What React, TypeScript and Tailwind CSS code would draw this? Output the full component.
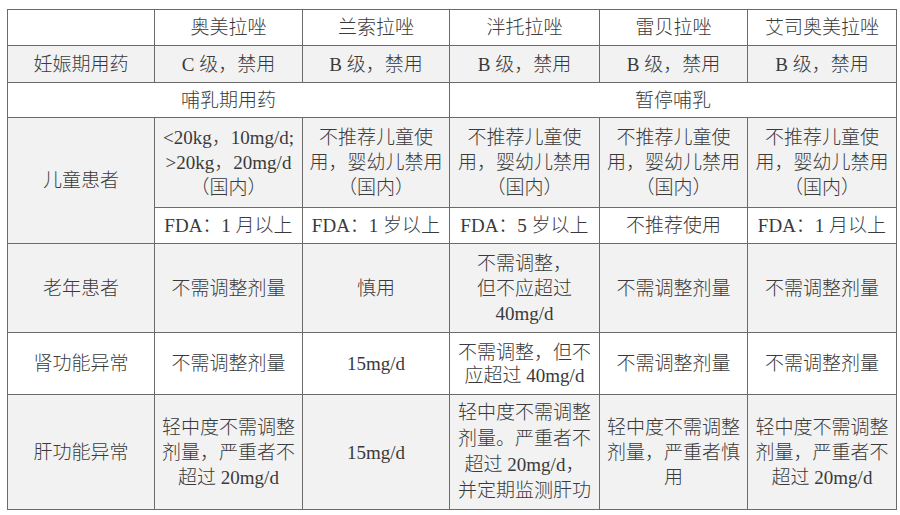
import React from "react";

const font = { fontFamily: '"Liberation Serif", "Noto Sans CJK SC", serif' };

function Cell({
  children,
  gray,
  colSpan,
  rowSpan,
}: {
  children: React.ReactNode;
  gray?: boolean;
  colSpan?: number;
  rowSpan?: number;
}) {
  return (
    <td
      colSpan={colSpan}
      rowSpan={rowSpan}
      className={`border border-[#6b6b6b] p-0 text-center align-middle whitespace-nowrap leading-[25px] ${
        gray ? "bg-[#f2f2f2]" : "bg-white"
      }`}
    >
      {children}
    </td>
  );
}

function Lines({ items }: { items: string[] }) {
  return (
    <>
      {items.map((t, i) => (
        <div key={i}>{t}</div>
      ))}
    </>
  );
}

const drugs = ["奥美拉唑", "兰索拉唑", "泮托拉唑", "雷贝拉唑", "艾司奥美拉唑"];
const notForKids = ["不推荐儿童使", "用，婴幼儿禁用", "（国内）"];

export default function App() {
  return (
    <div className="w-[900px] h-[515px] bg-white pt-[9px] pl-[7px] text-[19px] font-light text-[#3a3a3a]" style={font}>
      <table className="table-fixed border-collapse w-[889px]">
        <colgroup>
          <col className="w-[147px]" />
          <col className="w-[148px]" />
          <col className="w-[147px]" />
          <col className="w-[150px]" />
          <col className="w-[148px]" />
          <col className="w-[149px]" />
        </colgroup>
        <tbody>
          <tr className="h-[36px]">
            <Cell>{""}</Cell>
            {drugs.map((d) => (
              <Cell key={d}>{d}</Cell>
            ))}
          </tr>
          <tr className="h-[37px]">
            <Cell gray>妊娠期用药</Cell>
            <Cell gray>C 级，禁用</Cell>
            <Cell gray>B 级，禁用</Cell>
            <Cell gray>B 级，禁用</Cell>
            <Cell gray>B 级，禁用</Cell>
            <Cell gray>B 级，禁用</Cell>
          </tr>
          <tr className="h-[35px]">
            <Cell colSpan={3}>哺乳期用药</Cell>
            <Cell colSpan={3}>暂停哺乳</Cell>
          </tr>
          <tr className="h-[90px]">
            <Cell gray rowSpan={2}>
              儿童患者
            </Cell>
            <Cell gray>
              <Lines items={["<20kg，10mg/d;", ">20kg，20mg/d", "（国内）"]} />
            </Cell>
            <Cell gray>
              <Lines items={notForKids} />
            </Cell>
            <Cell gray>
              <Lines items={notForKids} />
            </Cell>
            <Cell gray>
              <Lines items={notForKids} />
            </Cell>
            <Cell gray>
              <Lines items={notForKids} />
            </Cell>
          </tr>
          <tr className="h-[36px]">
            <Cell>FDA：1 月以上</Cell>
            <Cell>FDA：1 岁以上</Cell>
            <Cell>FDA：5 岁以上</Cell>
            <Cell>不推荐使用</Cell>
            <Cell>FDA：1 月以上</Cell>
          </tr>
          <tr className="h-[89px]">
            <Cell gray>老年患者</Cell>
            <Cell gray>不需调整剂量</Cell>
            <Cell gray>慎用</Cell>
            <Cell gray>
              <Lines items={["不需调整，", "但不应超过", "40mg/d"]} />
            </Cell>
            <Cell gray>不需调整剂量</Cell>
            <Cell gray>不需调整剂量</Cell>
          </tr>
          <tr className="h-[62px]">
            <Cell>肾功能异常</Cell>
            <Cell>不需调整剂量</Cell>
            <Cell>15mg/d</Cell>
            <Cell>
              <div className="leading-[23px]">
                <Lines items={["不需调整，但不", "应超过 40mg/d"]} />
              </div>
            </Cell>
            <Cell>不需调整剂量</Cell>
            <Cell>不需调整剂量</Cell>
          </tr>
          <tr className="h-[115px]">
            <Cell gray>肝功能异常</Cell>
            <Cell gray>
              <Lines items={["轻中度不需调整", "剂量，严重者不", "超过 20mg/d"]} />
            </Cell>
            <Cell gray>15mg/d</Cell>
            <Cell gray>
              <div className="leading-[26px]">
                <Lines items={["轻中度不需调整", "剂量。严重者不", "超过 20mg/d，", "并定期监测肝功"]} />
              </div>
            </Cell>
            <Cell gray>
              <Lines items={["轻中度不需调整", "剂量，严重者慎", "用"]} />
            </Cell>
            <Cell gray>
              <Lines items={["轻中度不需调整", "剂量，严重者不", "超过 20mg/d"]} />
            </Cell>
          </tr>
        </tbody>
      </table>
    </div>
  );
}
